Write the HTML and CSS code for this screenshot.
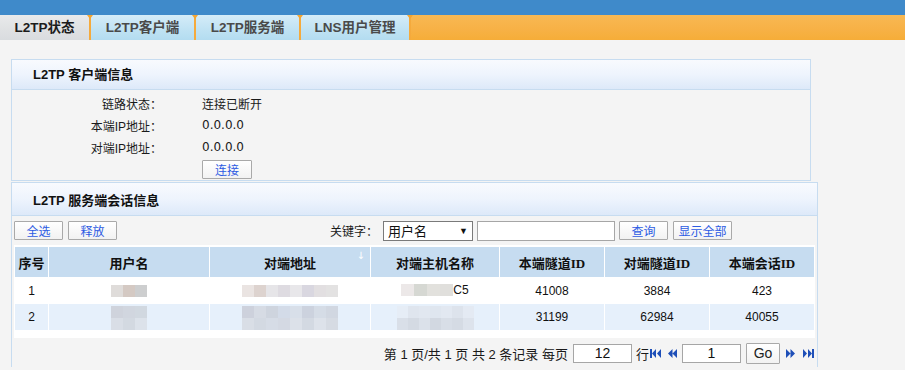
FILE: index.html
```html
<!DOCTYPE html>
<html lang="zh-CN">
<head>
<meta charset="utf-8">
<title>L2TP</title>
<link rel="stylesheet" href="styles.css">
</head>
<body>
<div class="topbar"></div>
<nav class="tabs">
  <div class="tab tab-active" style="width:89px">L2TP状态</div>
  <div class="sep"></div>
  <div class="tab" style="width:103px">L2TP客户端</div>
  <div class="sep"></div>
  <div class="tab" style="width:103px">L2TP服务端</div>
  <div class="sep"></div>
  <div class="tab" style="width:108px">LNS用户管理</div>
  <div class="sep"></div>
</nav>
<main class="main">
  <section class="panel panel-client">
    <div class="panel-head">L2TP 客户端信息</div>
    <div class="info">
      <div class="info-row"><span class="lbl">链路状态：</span><span class="val cjk">连接已断开</span></div>
      <div class="info-row"><span class="lbl">本端IP地址：</span><span class="val">0.0.0.0</span></div>
      <div class="info-row"><span class="lbl">对端IP地址：</span><span class="val">0.0.0.0</span></div>
      <div class="info-row"><span class="lbl"></span><button class="btn btn-connect">连接</button></div>
    </div>
  </section>
  <section class="panel panel-server">
    <div class="panel-head head2">L2TP 服务端会话信息</div>
    <div class="toolbar">
      <button class="btn btn-sm">全选</button>
      <button class="btn btn-sm">释放</button>
      <div class="search">
        <span class="kw">关键字：</span>
        <div class="fake-select"><span>用户名</span><span class="arrow">▼</span></div>
        <div class="fake-input"></div>
        <button class="btn btn-sm">查询</button>
        <button class="btn btn-all">显示全部</button>
      </div>
    </div>
    <div class="grid">
      <table>
        <colgroup>
          <col style="width:33px"><col style="width:160px"><col style="width:160px"><col style="width:128px"><col style="width:104px"><col style="width:104px"><col style="width:104px">
        </colgroup>
        <thead>
          <tr>
            <th>序号</th><th>用户名</th><th class="sorted">对端地址<span class="sort">↓</span></th><th>对端主机名称</th><th>本端隧道ID</th><th>对端隧道ID</th><th>本端会话ID</th>
          </tr>
        </thead>
        <tbody>
          <tr>
            <td>1</td>
            <td><span class="mosaic m3"><i style="background:#dfdcda"></i><i style="background:#d4c9c3"></i><i style="background:#cdcecf"></i></span></td>
            <td><span class="mosaic m8"><i style="background:#eae4e2"></i><i style="background:#ddd3cf"></i><i style="background:#e6e5e8"></i><i style="background:#dedbe1"></i><i style="background:#e8e7ea"></i><i style="background:#d9d7e0"></i><i style="background:#e2dfe1"></i><i style="background:#e3e2e2"></i></span></td>
            <td><span class="host"><span class="mosaic m4"><i style="background:#ece8e8"></i><i style="background:#d6d8d3"></i><i style="background:#e2e1dd"></i><i style="background:#e0dfdc"></i></span>C5</span></td>
            <td>41008</td><td>3884</td><td>423</td>
          </tr>
          <tr class="alt">
            <td>2</td>
            <td><span class="mosaic m3 two"><i style="background:#cfd3dc"></i><i style="background:#d1d6df"></i><i style="background:#d1d8e0"></i><i style="background:#d9dee6"></i><i style="background:#d3d9e1"></i><i style="background:#dce2ea"></i></span></td>
            <td><span class="mosaic m8 two"><i style="background:#cdd1dc"></i><i style="background:#d6dbe4"></i><i style="background:#ced4de"></i><i style="background:#d3dbe8"></i><i style="background:#d8dfe9"></i><i style="background:#ccd2de"></i><i style="background:#d5dce6"></i><i style="background:#d1d7e1"></i><i style="background:#d9dee6"></i><i style="background:#d3d9e2"></i><i style="background:#d6dce6"></i><i style="background:#d4d9e3"></i><i style="background:#dce1e9"></i><i style="background:#d3d9e2"></i><i style="background:#dde2ea"></i><i style="background:#d6dbe3"></i></span></td>
            <td><span class="mosaic m7 two"><i style="background:#e6edf6"></i><i style="background:#dfe5ee"></i><i style="background:#e1e7f0"></i><i style="background:#dfe6ef"></i><i style="background:#e2e8f1"></i><i style="background:#dde3ec"></i><i style="background:#e4eaf3"></i><i style="background:#d9dfe8"></i><i style="background:#d4dae3"></i><i style="background:#dbe1ea"></i><i style="background:#d2d8e1"></i><i style="background:#d8dee7"></i><i style="background:#d5dbe4"></i><i style="background:#dde3ec"></i></span></td>
            <td>31199</td><td>62984</td><td>40055</td>
          </tr>
        </tbody>
      </table>
    </div>
    <div class="pager">
      <span class="ptext">第 1 页/共 1 页 共 2 条记录 每页</span>
      <div class="fake-input pinput">12</div>
      <span class="ptext row">行</span>
      <svg class="pico" width="11" height="9" viewBox="0 0 11 9"><rect x="0" y="0" width="2" height="9" fill="#1e4fb8"/><path d="M6 0 L2 4.5 L6 9Z M11 0 L7 4.5 L11 9Z" fill="#1e4fb8"/></svg>
      <svg class="pico prev" width="9" height="9" viewBox="0 0 9 9"><path d="M4.5 0 L0 4.5 L4.5 9Z M9 0 L4.5 4.5 L9 9Z" fill="#1e4fb8"/></svg>
      <div class="fake-input pinput2">1</div>
      <button class="btn btn-go">Go</button>
      <svg class="pico next" width="9" height="9" viewBox="0 0 9 9"><path d="M0 0 L4.5 4.5 L0 9Z M4.5 0 L9 4.5 L4.5 9Z" fill="#1e4fb8"/></svg>
      <svg class="pico last" width="11" height="9" viewBox="0 0 11 9"><path d="M0 0 L4 4.5 L0 9Z M5 0 L9 4.5 L5 9Z" fill="#1e4fb8"/><rect x="9" y="0" width="2" height="9" fill="#1e4fb8"/></svg>
    </div>
  </section>
</main>
</body>
</html>
```
FILE: styles.css
```css
* { box-sizing: border-box; }
html, body { margin: 0; padding: 0; }
body {
  background: #f4f4f4;
  font-family: "Liberation Sans", "Noto Sans CJK SC", sans-serif;
  font-size: 12px;
  color: #1a1a1a;
  height: 370px;
  overflow: hidden;
}
.topbar { height: 15px; background: #3f8aca; }
.tabs {
  height: 25px;
  display: flex;
  background: linear-gradient(#f8b853, #f7b145 60%, #f6ad38);
}
.tab {
  height: 25px;
  line-height: 25px;
  text-align: center;
  font-weight: bold;
  font-size: 13.5px;
  color: #4a4a4a;
  background: linear-gradient(#d5ecf8, #bfe2f3 60%, #b3dcf0);
  font-family: "Liberation Sans", "Noto Sans CJK SC", sans-serif;
}
.tab-active {
  color: #1c1c1c;
  background: linear-gradient(#e9eaeb, #dfe1e3 60%, #d9dcdf);
}
.sep {
  width: 2px;
  height: 25px;
  background: #f5aa3c;
  position: relative;
}
.sep::before {
  content: "";
  position: absolute;
  left: -2px;
  top: 0;
  border-left: 3px solid transparent;
  border-right: 3px solid transparent;
  border-top: 4px solid #f5a631;
}
.main { padding: 19px 0 0 11px; }
.panel {
  border: 1px solid #c7dcf0;
  background: #f4f4f4;
}
.panel-client { width: 800px; }
.panel-server { width: 807px; margin-top: 1px; border-bottom: none; }
.panel-head {
  height: 30px;
  line-height: 30px;
  padding-left: 21px;
  font-weight: bold;
  font-size: 13px;
  color: #111;
  border-bottom: 1px solid #c7dcf0;
  background: linear-gradient(#f8fafe, #eef4fd 50%, #dde9f9);
}
.head2 { height: 33px; line-height: 36px; }
.info { padding-top: 2px; }
.info-row {
  height: 22px;
  display: flex;
  align-items: center;
}
.lbl {
  width: 150px;
  text-align: right;
  font-size: 12px;
  color: #1a1a1a;
}
.val {
  margin-left: 40px;
  font-family: "DejaVu Sans", "Noto Sans CJK SC", sans-serif;
  font-size: 12px;
  color: #1a1a1a;
}
.val.cjk { font-family: "Noto Sans CJK SC", sans-serif; }
.btn {
  font-family: "Noto Sans CJK SC", sans-serif;
  font-size: 12px;
  color: #2d5be3;
  height: 19px;
  padding: 0;
  line-height: 17px;
  border: 1px solid #a9a9a9;
  border-radius: 1px;
  background: linear-gradient(#ffffff, #f2f2f2);
}
.btn-connect { width: 50px; margin-left: 40px; }
.toolbar {
  height: 28px;
  display: flex;
  align-items: center;
  padding-left: 2px;
  padding-top: 1px;
}
.btn-sm { width: 49px; margin-right: 5px; }
.search {
  display: flex;
  align-items: center;
  margin-left: 208px;
}
.kw { width: 53px; font-size: 12px; color: #1a1a1a; }
.fake-select {
  width: 90px;
  height: 20px;
  border: 1px solid #7a7a7a;
  background: #fff;
  display: flex;
  justify-content: space-between;
  align-items: center;
  padding: 0 4px 0 4px;
  font-size: 13px;
  color: #111;
  margin-right: 4px;
}
.arrow { font-size: 9px; }
.fake-input {
  width: 138px;
  height: 20px;
  border: 1px solid #a6a6a6;
  background: #fff;
  margin-right: 4px;
}
.btn-all { width: 59px; }
.grid {
  width: 801px;
  margin-left: 2px;
  margin-top: 1px;
  background: #fff;
  padding: 1px 0 7px 0;
}
table {
  width: 801px;
  table-layout: fixed;
  border-collapse: separate;
  border-spacing: 1px;
}
th {
  height: 30px;
  padding: 0;
  background: #c6dcf0;
  font-family: "Liberation Serif", "Noto Sans CJK SC", serif;
  font-weight: bold;
  font-size: 13px;
  color: #111;
}
th.sorted { position: relative; }
.sort {
  position: absolute;
  right: 5px;
  top: 3px;
  color: #fff;
  font-size: 10px;
  font-weight: normal;
  font-family: "DejaVu Sans", sans-serif;
}
td {
  height: 25px;
  padding: 0;
  text-align: center;
  font-size: 12px;
  color: #111;
  background: #fff;
}
tr.alt td { background: #e6f0fb; }
.mosaic {
  display: inline-grid;
  vertical-align: middle;
  grid-auto-rows: 12px;
  filter: blur(0.4px);
}
.mosaic i { display: block; }
.mosaic.m3 { grid-template-columns: repeat(3, 12px); }
.mosaic.m4 { grid-template-columns: repeat(4, 13px); }
.mosaic.m7 { grid-template-columns: repeat(7, 11px); }
.mosaic.m8 { grid-template-columns: repeat(8, 12px); }
.mosaic.two { margin-top: 2px; }
.host { display: inline-flex; align-items: center; }
.pager {
  height: 29px;
  display: flex;
  align-items: center;
  justify-content: flex-end;
  padding-right: 3px;
  padding-top: 1px;
}
.ptext { font-size: 13px; color: #1a1a1a; margin-right: 5px; }
.ptext.row { margin-left: 4px; margin-right: 1px; }
.pinput {
  width: 59px;
  height: 19px;
  margin: 0;
  text-align: center;
  font-size: 14px;
  line-height: 17px;
  color: #111;
}
.pinput2 {
  width: 59px;
  height: 19px;
  margin: 0 5px 0 5px;
  text-align: center;
  font-size: 14px;
  line-height: 17px;
  color: #111;
}
.pico { display: block; }
.pico.prev { margin-left: 7px; }
.btn-go {
  width: 34px;
  height: 21px;
  font-family: "Liberation Sans", sans-serif;
  font-size: 14px;
  color: #222;
  margin-right: 6px;
}
.pico.last { margin-left: 8px; }
```
